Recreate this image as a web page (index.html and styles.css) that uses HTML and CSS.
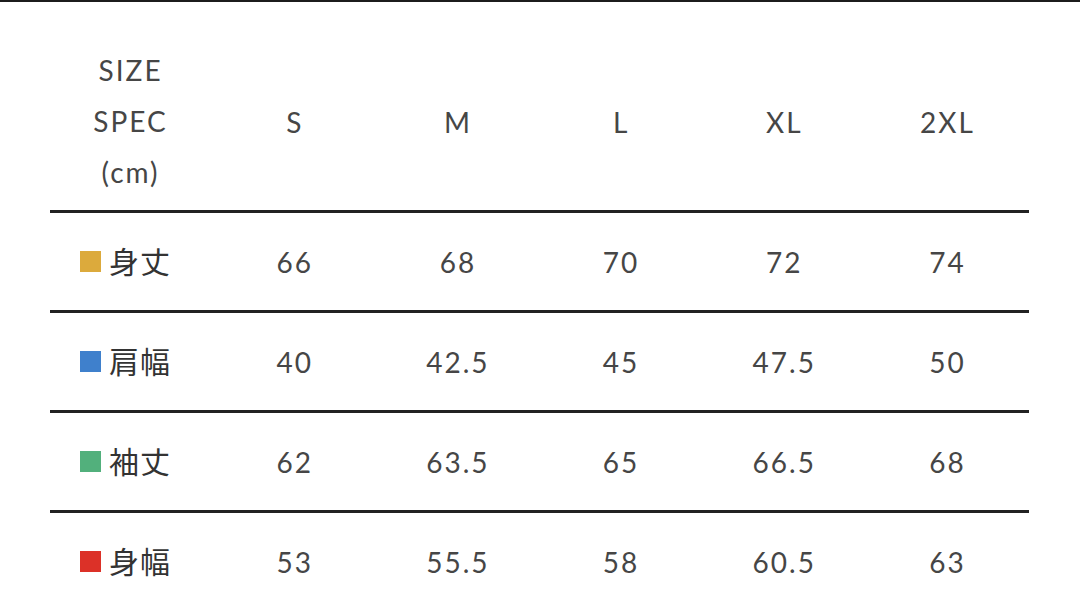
FILE: index.html
```html
<!DOCTYPE html>
<html lang="ja">
<head>
<meta charset="utf-8">
<title>Size Spec</title>
<link rel="stylesheet" href="styles.css">
</head>
<body>
<div class="page">
  <div class="table">
    <div class="row head">
      <div class="cell label-head">SIZE<br>SPEC<br>(cm)</div>
      <div class="cell">S</div>
      <div class="cell">M</div>
      <div class="cell">L</div>
      <div class="cell">XL</div>
      <div class="cell">2XL</div>
    </div>
    <div class="row body">
      <div class="cell label"><span class="sw yellow"></span><span class="jp">身丈</span></div>
      <div class="cell">66</div>
      <div class="cell">68</div>
      <div class="cell">70</div>
      <div class="cell">72</div>
      <div class="cell">74</div>
    </div>
    <div class="row body">
      <div class="cell label"><span class="sw blue"></span><span class="jp">肩幅</span></div>
      <div class="cell">40</div>
      <div class="cell">42.5</div>
      <div class="cell">45</div>
      <div class="cell">47.5</div>
      <div class="cell">50</div>
    </div>
    <div class="row body">
      <div class="cell label"><span class="sw green"></span><span class="jp">袖丈</span></div>
      <div class="cell">62</div>
      <div class="cell">63.5</div>
      <div class="cell">65</div>
      <div class="cell">66.5</div>
      <div class="cell">68</div>
    </div>
    <div class="row body">
      <div class="cell label"><span class="sw red"></span><span class="jp">身幅</span></div>
      <div class="cell">53</div>
      <div class="cell">55.5</div>
      <div class="cell">58</div>
      <div class="cell">60.5</div>
      <div class="cell">63</div>
    </div>
  </div>
</div>
</body>
</html>
```
FILE: styles.css
```css
html, body {
  margin: 0;
  padding: 0;
  background: #ffffff;
}
body {
  width: 1080px;
  height: 611px;
  overflow: hidden;
  font-family: Lato, "Open Sans", "Noto Sans CJK JP", sans-serif;
  color: #464646;
}
.page {
  border-top: 2px solid #1c1c1c;
  height: 609px;
  box-sizing: border-box;
}
.table {
  margin-left: 50px;
  width: 979px;
  display: flex;
  flex-direction: column;
}
.row {
  display: grid;
  grid-template-columns: repeat(6, 1fr);
  align-items: center;
}
.head {
  padding-top: 43px;
  padding-bottom: 12px;
  height: 153px;
}
.body {
  border-top: 3px solid #222222;
  height: 97px;
}
.cell {
  text-align: center;
  font-size: 28px;
  letter-spacing: 2px;
  line-height: 1;
}
.label-head {
  line-height: 51px;
  letter-spacing: 2px;
  padding-right: 2px;
}
.label {
  display: flex;
  align-items: center;
  justify-content: flex-start;
  padding-left: 30px;
  gap: 8px;
}
.sw {
  width: 21px;
  height: 21px;
  display: block;
}
.yellow { background: #dcaa3c; }
.blue { background: #3f80cc; }
.green { background: #52b07c; }
.red { background: #dc3128; }
.jp {
  font-family: "Noto Sans CJK JP", sans-serif;
  font-size: 30px;
  letter-spacing: 1px;
  color: #333333;
  margin-top: -4px;
}
```
